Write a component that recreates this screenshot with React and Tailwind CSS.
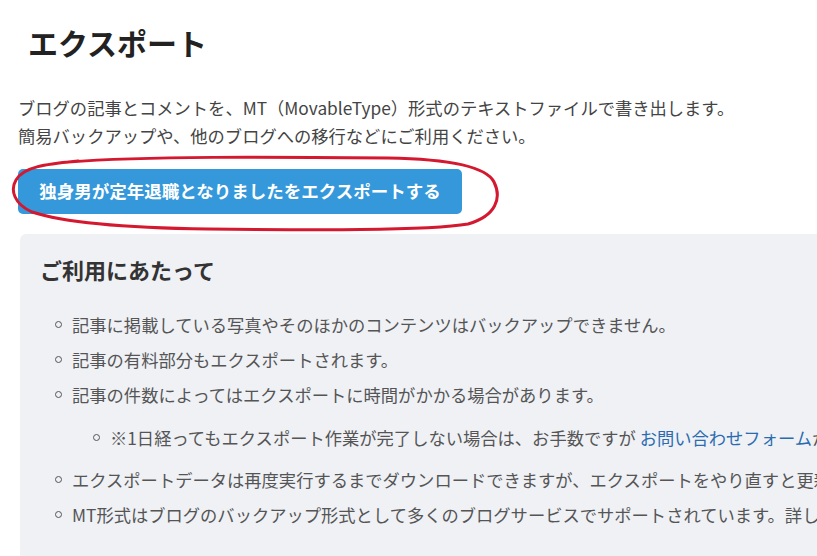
const NOTES = [
  "記事に掲載している写真やそのほかのコンテンツはバックアップできません。",
  "記事の有料部分もエクスポートされます。",
  "記事の件数によってはエクスポートに時間がかかる場合があります。",
];

function Bullet({ children, nested }) {
  return (
    <li className={`flex items-center ${nested ? "pl-[38px]" : ""}`}>
      <span className="w-[18px] shrink-0 flex justify-start pl-[1px]">
        <span className="block w-[7px] h-[7px] rounded-full border border-[#555]" />
      </span>
      <span className="whitespace-nowrap">{children}</span>
    </li>
  );
}

function RedLoop() {
  return (
    <svg
      className="absolute left-[8px] top-[152px] pointer-events-none"
      width="500"
      height="84"
      viewBox="0 0 500 84"
      fill="none"
    >
      <path
        d="M60 10 C 140 4, 260 5, 380 6 C 440 7, 478 14, 486 30 C 494 46, 488 64, 460 72 C 420 79, 300 78, 200 77 C 130 76, 60 72, 24 60 C 6 52, 2 38, 8 28 C 16 14, 40 12, 70 9"
        stroke="#d4182f"
        strokeWidth="3"
        strokeLinecap="round"
        strokeLinejoin="round"
      />
    </svg>
  );
}

export default function App() {
  return (
    <div className="relative w-[817px] h-[556px] overflow-hidden bg-white font-['Noto_Sans_CJK_JP','Noto_Sans',sans-serif] text-[#333]">
      <RedLoop />
      <div className="pl-[18px] pt-[20px]">
        <h1 className="pl-[10px] text-[30px] font-bold leading-[44px] text-[#222]">エクスポート</h1>

        <p className="mt-[30px] text-[17.3px] leading-[28px] text-[#444]">
          ブログの記事とコメントを、MT（MovableType）形式のテキストファイルで書き出します。
          <br />
          簡易バックアップや、他のブログへの移行などにご利用ください。
        </p>

        <button className="mt-[19px] h-[45px] w-[444px] rounded-[5px] bg-[#3498db] text-white text-[17.5px] font-bold">
          独身男が定年退職となりましたをエクスポートする
        </button>

        <div className="mt-[20px] ml-[2px] rounded-tl-[6px] bg-[#eff1f5] pl-[20px] pt-[19px] pb-[40px] w-[900px]">
          <h2 className="text-[22px] font-bold leading-[32px] text-[#333]">ご利用にあたって</h2>
          <ul className="mt-[22px] pl-[14px] text-[17.3px] leading-[35px] text-[#555]">
            {NOTES.map((n) => (
              <Bullet key={n}>{n}</Bullet>
            ))}
            <li className="py-[7.5px]">
              <ul>
                <Bullet nested>
                  ※1日経ってもエクスポート作業が完了しない場合は、お手数ですが{" "}
                  <a className="text-[#2b6cb0]">お問い合わせフォーム</a>からご連絡ください。
                </Bullet>
              </ul>
            </li>
            <Bullet>エクスポートデータは再度実行するまでダウンロードできますが、エクスポートをやり直すと更新されます。</Bullet>
            <Bullet>MT形式はブログのバックアップ形式として多くのブログサービスでサポートされています。詳しくはヘルプをご覧ください。</Bullet>
          </ul>
        </div>
      </div>
    </div>
  );
}
